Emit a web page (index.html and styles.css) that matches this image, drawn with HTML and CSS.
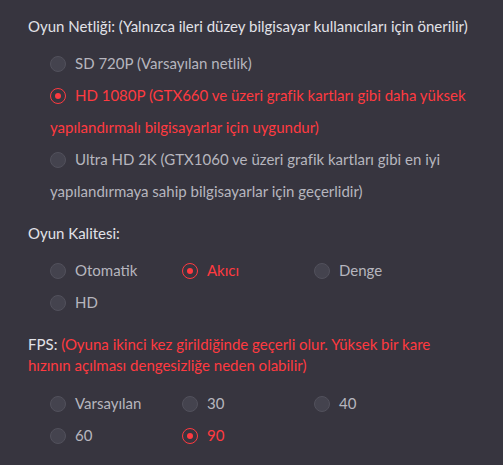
FILE: index.html
```html
<!DOCTYPE html>
<html lang="tr">
<head>
    <meta charset="UTF-8">
    <meta name="viewport" content="width=device-width, initial-scale=1.0">
    <title>Grafik Ayarları</title>
    <link rel="stylesheet" href="styles.css">
</head>
<body>
    <div class="settings">
        <!-- Netlik -->
        <div class="section">
            <div class="title">Oyun Netliği: (Yalnızca ileri düzey bilgisayar kullanıcıları için önerilir)</div>
            <div class="stack">
                <label class="option"><span class="radio"></span>SD 720P (Varsayılan netlik)</label>
                <label class="option checked"><span class="radio"></span>HD 1080P (GTX660 ve üzeri grafik kartları gibi daha yüksek yapılandırmalı bilgisayarlar için uygundur)</label>
                <label class="option"><span class="radio"></span>Ultra HD 2K (GTX1060 ve üzeri grafik kartları gibi en iyi yapılandırmaya sahip bilgisayarlar için geçerlidir)</label>
            </div>
        </div>

        <!-- Kalite -->
        <div class="section">
            <div class="title">Oyun Kalitesi:</div>
            <div class="grid">
                <label class="option"><span class="radio"></span>Otomatik</label>
                <label class="option checked"><span class="radio"></span>Akıcı</label>
                <label class="option"><span class="radio"></span>Denge</label>
                <label class="option"><span class="radio"></span>HD</label>
            </div>
        </div>

        <!-- FPS -->
        <div class="section">
            <div class="title fps">FPS: <span class="warn">(Oyuna ikinci kez girildiğinde geçerli olur. Yüksek bir kare hızının açılması dengesizliğe neden olabilir)</span></div>
            <div class="grid">
                <label class="option"><span class="radio"></span>Varsayılan</label>
                <label class="option"><span class="radio"></span>30</label>
                <label class="option"><span class="radio"></span>40</label>
                <label class="option"><span class="radio"></span>60</label>
                <label class="option checked"><span class="radio"></span>90</label>
            </div>
        </div>
    </div>
</body>
</html>
```

FILE: styles.css
```css
body {
    margin: 0;
    background-color: #37353f;
    font-family: Lato, "Noto Sans", sans-serif;
    font-size: 15px;
    color: #b6b5be;
}
.settings {
    padding: 16px 30px 0 28px;
}
.section {
    margin-bottom: 16px;
}
.title {
    color: #e2e2e8;
    line-height: 20px;
    margin-bottom: 11px;
}
.title.fps {
    line-height: 21px;
}
.warn {
    color: #ff3a40;
}
.stack, .grid {
    padding-left: 22px;
}
.grid {
    display: grid;
    grid-template-columns: repeat(3, 132px);
}
.option {
    display: block;
    line-height: 32px;
    cursor: pointer;
}
.radio {
    display: inline-block;
    width: 16px;
    height: 16px;
    margin-right: 9px;
    vertical-align: -3px;
    border-radius: 50%;
    background-color: #44434e;
    border: 1px solid #52515c;
    box-sizing: border-box;
    position: relative;
}
.option.checked {
    color: #ff3a40;
}
.option.checked .radio {
    background-color: transparent;
    border: 1.5px solid #ff3a40;
}
.option.checked .radio::after {
    content: "";
    position: absolute;
    left: 3.5px;
    top: 3.5px;
    width: 6px;
    height: 6px;
    border-radius: 50%;
    background-color: #ff3a40;
}
```
